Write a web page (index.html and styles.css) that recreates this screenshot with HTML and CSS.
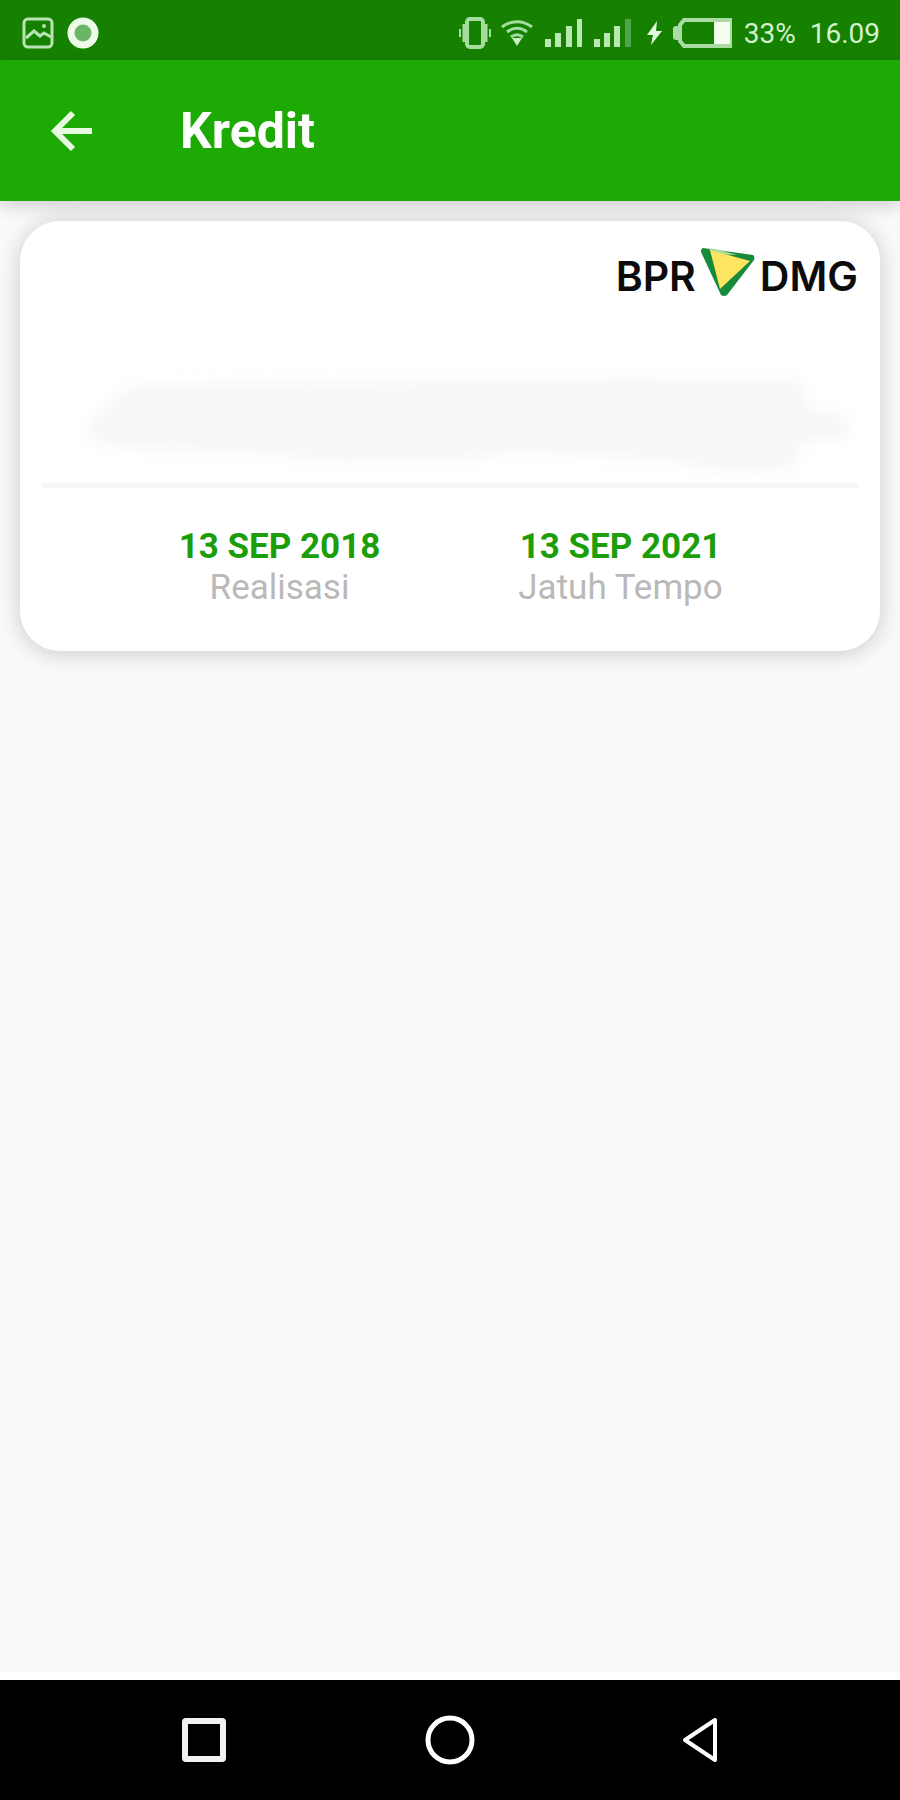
FILE: index.html
```html
<!DOCTYPE html>
<html lang="id">
<head>
  <meta charset="UTF-8">
  <meta name="viewport" content="width=device-width, initial-scale=1.0">
  <title>Kredit</title>
  <link rel="stylesheet" href="styles.css">
</head>
<body>
  <div class="status-bar">
    <div class="status-left">
      <svg width="32" height="32" viewBox="0 0 32 32" fill="none" stroke="#b9e3b4">
        <rect x="2" y="2" width="28" height="28" rx="4" stroke-width="3"/>
        <path d="M4 21l8-7 6 5 4-3 7 4" stroke-width="3"/>
        <circle cx="22" cy="9" r="2" fill="#b9e3b4" stroke="none"/>
      </svg>
      <svg width="32" height="32" viewBox="0 0 32 32">
        <circle cx="16" cy="16" r="12" fill="#6cb567" stroke="#eefbea" stroke-width="7"/>
      </svg>
    </div>
    <div class="status-right">
      <!-- vibrate -->
      <svg class="icon-vibrate" width="32" height="32" viewBox="0 0 32 32" fill="none" stroke="#a5dd9f">
        <rect x="8" y="2" width="16" height="28" rx="3" stroke-width="4"/>
        <path d="M5 7v18M27 7v18" stroke-width="3"/>
        <path d="M1 12v8M31 12v8" stroke-width="2"/>
      </svg>
      <!-- wifi -->
      <svg class="icon-wifi" width="32" height="28" viewBox="0 0 32 28" fill="none" stroke="#a5dd9f" stroke-width="3">
        <path d="M1 8c9-7 21-7 30 0M6 13c6-5 14-5 20 0M10 18c4-3 8-3 12 0"/>
        <path d="M11 19h10l-5 8z" fill="#c9f0c4" stroke="none"/>
      </svg>
      <!-- signal -->
      <svg class="icon-signal" width="37" height="28" viewBox="0 0 37 28" fill="#b9e8b3">
        <rect x="0" y="20" width="6" height="8"/>
        <rect x="10" y="14" width="6" height="14"/>
        <rect x="21" y="7" width="6" height="21"/>
        <rect x="32" y="0" width="5" height="28"/>
      </svg>
      <svg class="icon-signal" width="37" height="28" viewBox="0 0 37 28" fill="#b9e8b3">
        <rect x="0" y="20" width="6" height="8"/>
        <rect x="10" y="14" width="6" height="14"/>
        <rect x="20" y="7" width="6" height="21"/>
        <rect x="31" y="0" width="6" height="28" fill="#4fa64a"/>
      </svg>
      <!-- charging -->
      <svg class="icon-bolt" width="15" height="26" viewBox="0 0 15 26" fill="#e2fbdc">
        <path d="M10 1L0 15h6L4 25l11-14H9z"/>
      </svg>
      <!-- battery -->
      <svg class="icon-battery" width="60" height="30" viewBox="0 0 60 30">
        <path d="M12 2h46v26H12l-4-5V7z" fill="none" stroke="#a9dba3" stroke-width="4"/>
        <rect x="1" y="8" width="7" height="14" rx="3" fill="#a9dba3"/>
        <rect x="42" y="4" width="16" height="22" fill="#f3fdf0"/>
      </svg>
      <span class="battery-level">33%</span>
      <span class="clock">16.09</span>
    </div>
  </div>

  <header class="app-bar">
    <button class="back-button" aria-label="Kembali">
      <svg width="42" height="42" viewBox="0 0 42 42" fill="none" stroke="#e6fbe0" stroke-width="6">
        <path d="M23 3L5 21l18 18M4 21h38"/>
      </svg>
    </button>
    <h1 class="title">Kredit</h1>
  </header>

  <main class="content">
    <section class="card">
      <div class="logo">
        <span>BPR</span>
        <svg width="54" height="58" viewBox="0 0 54 58">
          <path d="M2 1L52 8q2 1 1 5L26 48q-3 2-6 0L0 5q-1-3 2-4z" fill="#178a3c"/>
          <path d="M7 1L19 3 36 8 12 7z" fill="#a9d9a0"/>
          <path d="M9 3L49 14 19 42z" fill="#fde561"/>
        </svg>
        <span>DMG</span>
      </div>
      <svg class="smudge" viewBox="0 0 816 120" fill="#f6f6f6">
        <path d="M48 62l22-22 24-18 200-2 300-4 164 2 6 28 42 8v20l-46 4-12 28-60 2-70-12-140-8-60 8-120 2-80-8-140-6-36-10z"/>
      </svg>
      <div class="dates">
        <div class="date-item">
          <div class="date">13 SEP 2018</div>
          <div class="date-label">Realisasi</div>
        </div>
        <div class="date-item">
          <div class="date">13 SEP 2021</div>
          <div class="date-label">Jatuh Tempo</div>
        </div>
      </div>
    </section>
  </main>

  <nav class="nav-bar">
    <button class="nav-button" aria-label="Aplikasi terbaru">
      <svg width="44" height="44" viewBox="0 0 44 44" fill="none" stroke="#f2f2f2" stroke-width="6">
        <rect x="3" y="3" width="38" height="38" rx="1"/>
      </svg>
    </button>
    <button class="nav-button" aria-label="Beranda">
      <svg width="50" height="50" viewBox="0 0 50 50" fill="none" stroke="#fff" stroke-width="5">
        <circle cx="25" cy="25" r="22"/>
      </svg>
    </button>
    <button class="nav-button nav-back" aria-label="Kembali">
      <svg width="36" height="46" viewBox="0 0 36 46" fill="none" stroke="#fff" stroke-width="4" stroke-linejoin="round">
        <path d="M33 3v40L3 23z"/>
      </svg>
    </button>
  </nav>
</body>
</html>
```

FILE: styles.css
```css
* {
  box-sizing: border-box;
}
body {
  display: flex;
  flex-direction: column;
  min-height: 100vh;
  margin: 0;
  background-color: #fafafa;
  font-family: Roboto, sans-serif;
}
svg {
  display: block;
  flex-shrink: 0;
}
button {
  padding: 0;
  background: none;
  border: none;
  cursor: pointer;
}

/* status bar */
.status-bar {
  display: flex;
  justify-content: space-between;
  height: 60px;
  padding: 6px 20px 0 22px;
  background-color: #168000;
}
.status-left,
.status-right {
  display: flex;
  align-items: center;
}
.status-left {
  gap: 13px;
}
.status-right {
  color: #d3f2cd;
  font-size: 28px;
}
.icon-wifi,
.icon-battery {
  margin-left: 10px;
}
.icon-signal {
  margin-left: 12px;
}
.icon-bolt {
  margin-left: 16px;
}
.battery-level {
  margin-left: 12px;
}
.clock {
  margin-left: 14px;
}

/* app bar */
.app-bar {
  display: flex;
  align-items: center;
  height: 141px;
  padding: 0 50px;
  background-color: #1eaa04;
  box-shadow: 0 6px 16px rgba(0, 0, 0, 0.16);
}
.title {
  margin: 0 0 0 88px;
  color: #fff;
  font-size: 50px;
  font-weight: 700;
}

/* card */
.content {
  flex: 1;
  padding: 20px 20px 0;
  border-bottom: 8px solid #fff;
}
.card {
  padding: 25px 22px 43px;
  background-color: #fff;
  border-radius: 40px;
  box-shadow: 0 2px 24px rgba(0, 0, 0, 0.2);
}
.logo {
  display: flex;
  align-items: center;
  justify-content: flex-end;
  gap: 5px;
  height: 60px;
  color: #0c0c0c;
  font-family: Inter, sans-serif;
  font-size: 41px;
  font-weight: 600;
}
.smudge {
  width: 100%;
  margin-top: 57px;
  filter: blur(8px);
}
.dates {
  display: grid;
  grid-template-columns: 1fr 1fr;
  padding: 38px 67px 0;
  border-top: 5px solid #f7f7f7;
  text-align: center;
}
.date,
.date-label {
  font-size: 35px;
  line-height: 41px;
}
.date {
  color: #1b9e0a;
  font-weight: 700;
}
.date-label {
  color: #b9b9b9;
}

/* navigation bar */
.nav-bar {
  display: grid;
  grid-template-columns: 1fr auto 1fr;
  align-items: center;
  height: 120px;
  padding: 0 182px;
  background-color: #000;
}
.nav-button {
  justify-self: start;
}
.nav-back {
  justify-self: end;
}
```
